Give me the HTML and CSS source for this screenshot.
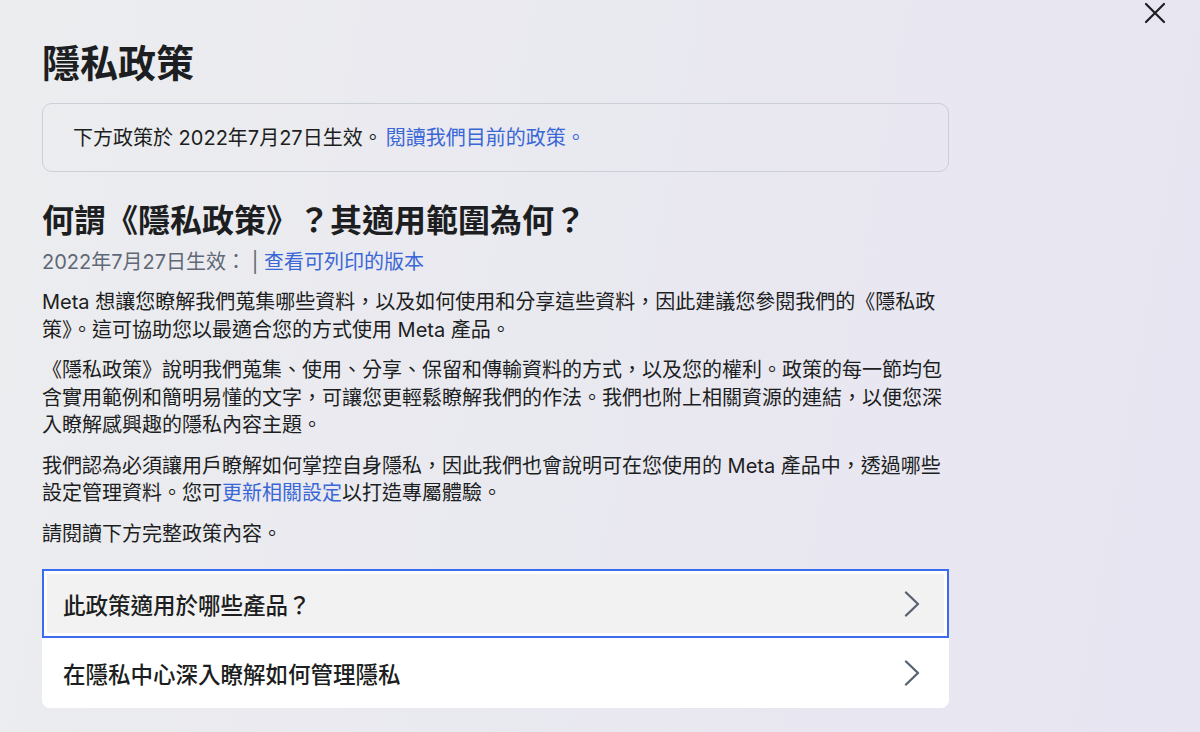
FILE: index.html
```html
<!DOCTYPE html>
<html lang="zh-Hant">
<head>
    <meta charset="UTF-8">
    <meta name="viewport" content="width=device-width, initial-scale=1.0">
    <title>隱私政策</title>
    <link rel="stylesheet" href="styles.css">
</head>
<body>
    <button class="close-btn" aria-label="關閉">
        <svg width="22" height="22" viewBox="0 0 22 22">
            <path d="M2 2 L20 20 M20 2 L2 20" stroke="#1c1e21" stroke-width="2.2" stroke-linecap="round" fill="none"/>
        </svg>
    </button>
    <main class="content">
        <h1 class="page-title">隱私政策</h1>
        <div class="notice">
            下方政策於 2022年7月27日生效。<a href="#" class="notice-link">閱讀我們目前的政策。</a>
        </div>

        <h2 class="section-title">何謂《隱私政策》？其適用範圍為何？</h2>
        <div class="meta-line">2022年7月27日生效： <span class="sep">|</span> <a href="#">查看可列印的版本</a></div>

        <p>Meta 想讓您瞭解我們蒐集哪些資料，以及如何使用和分享這些資料，因此建議您參閱我們的《隱私政策》。這可協助您以最適合您的方式使用 Meta 產品。</p>
        <p>《隱私政策》說明我們蒐集、使用、分享、保留和傳輸資料的方式，以及您的權利。政策的每一節均包含實用範例和簡明易懂的文字，可讓您更輕鬆瞭解我們的作法。我們也附上相關資源的連結，以便您深入瞭解感興趣的隱私內容主題。</p>
        <p>我們認為必須讓用戶瞭解如何掌控自身隱私，因此我們也會說明可在您使用的 Meta 產品中，透過哪些設定管理資料。您可<a href="#">更新相關設定</a>以打造專屬體驗。</p>
        <p>請閱讀下方完整政策內容。</p>

        <div class="link-list">
            <a href="#" class="link-item focused">
                <span>此政策適用於哪些產品？</span>
                <svg class="chevron" width="16" height="26" viewBox="0 0 16 26">
                    <path d="M2 1.5 L14 13 L2 24.5" stroke="#5a6574" stroke-width="2.4" stroke-linecap="round" stroke-linejoin="round" fill="none"/>
                </svg>
            </a>
            <a href="#" class="link-item">
                <span>在隱私中心深入瞭解如何管理隱私</span>
                <svg class="chevron" width="16" height="26" viewBox="0 0 16 26">
                    <path d="M2 1.5 L14 13 L2 24.5" stroke="#5a6574" stroke-width="2.4" stroke-linecap="round" stroke-linejoin="round" fill="none"/>
                </svg>
            </a>
        </div>
    </main>
</body>
</html>
```

FILE: styles.css
```css
html, body {
    height: 100%;
}
body {
    margin: 0;
    font-family: Inter, "Noto Sans CJK TC", sans-serif;
    color: #1c1e21;
    background: linear-gradient(100deg, #ecedef 0%, #e9e9f0 45%, #e8e5f2 100%);
    overflow: hidden;
}
a {
    color: #3a67d6;
    text-decoration: none;
}
.close-btn {
    position: absolute;
    top: 2px;
    right: 34px;
    background: none;
    border: none;
    padding: 0;
    cursor: pointer;
}
.content {
    width: 907px;
    padding: 41px 0 0 42px;
}
.page-title {
    margin: 0 0 18px;
    font-size: 38px;
    line-height: 44px;
    font-weight: 700;
}
.notice {
    border: 1px solid #cbcfd7;
    border-radius: 10px;
    padding: 20px 30px 19px;
    font-size: 20px;
    line-height: 28px;
}
.notice-link {
    margin-left: 3px;
}
.section-title {
    margin: 29px 0 0;
    font-size: 32px;
    line-height: 40px;
    font-weight: 700;
}
.meta-line {
    margin-top: 7px;
    font-size: 20px;
    line-height: 28px;
    color: #5f6876;
}
.meta-line .sep {
    color: #5f6876;
}
p {
    max-width: 903px;
    margin: 13px 0 0;
    font-size: 20px;
    line-height: 27.5px;
}
.link-list {
    margin-top: 21px;
    background: #fff;
    border-radius: 0 0 8px 8px;
    overflow: hidden;
}
.link-item {
    display: flex;
    align-items: center;
    justify-content: space-between;
    height: 70px;
    padding: 0 29px 0 21px;
    font-size: 22.5px;
    font-weight: 500;
    color: #1c1e21;
}
.link-item.focused {
    height: 69px;
    background: #f2f2f2;
    box-shadow: inset 0 0 0 2px #3b6cf0, inset 0 0 0 5px #fff;
}
.chevron {
    flex-shrink: 0;
}
```
